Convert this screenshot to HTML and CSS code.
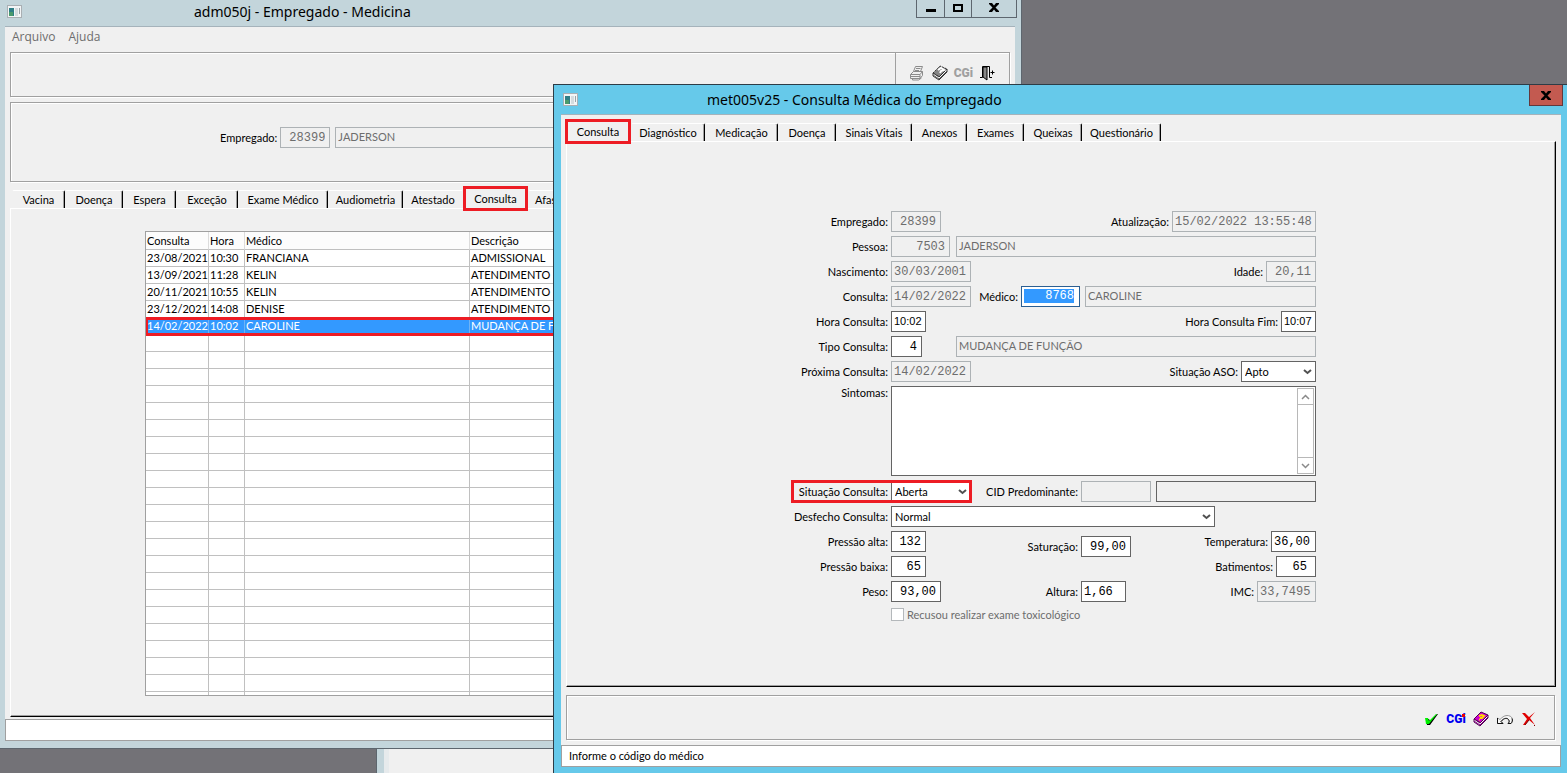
FILE: index.html
```html
<!DOCTYPE html>
<html lang="pt-BR">
<head>
<meta charset="utf-8">
<title>Consulta Médica do Empregado</title>
<link rel="stylesheet" href="styles.css">
</head>
<body>
<main class="desktop">
  <div class="window window-under"><div class="under-body"></div></div>

  <section class="window window-main">
    <header class="titlebar">
      <svg class="app-icon" width="15" height="13" viewBox="0 0 15 13" shape-rendering="crispEdges"><rect width="15" height="13" fill="#a9afb3"/><rect x="1" y="1" width="13" height="11" fill="#f3f5f6"/><rect x="2" y="3" width="5" height="8" fill="#2f7f86"/><rect x="2" y="7" width="4" height="4" fill="#4a9a6c"/><rect x="8" y="3" width="3" height="8" fill="#d5dcdf"/><rect x="12" y="3" width="1" height="6" fill="#98a3a8"/></svg>
      <h1 class="title">adm050j - Empregado - Medicina</h1>
      <div class="controls">
        <button class="control" aria-label="Minimizar"><svg width="10" height="9" viewBox="0 0 10 9"><path d="M0 6h10v3H0z"/></svg></button>
        <button class="control" aria-label="Maximizar"><svg width="10" height="9" viewBox="0 0 10 9"><path d="M1 2h8v6H1z" fill="none" stroke="#000" stroke-width="2"/></svg></button>
        <button class="control control-wide" aria-label="Fechar"><svg width="10" height="9" viewBox="0 0 10 9"><path d="M0 0h3l2 2.500L7 0h3v1L6.500 4.500 10 8v1H7L5 6.500 3 9H0V8l3.500-3.500L0 1z"/></svg></button>
      </div>
    </header>
    <div class="client">
      <nav class="menubar"><button class="menu-item">Arquivo</button><button class="menu-item">Ajuda</button></nav>
      <div class="etched toolbar-top">
        <div class="tool-group">
          <button class="tool" aria-label="Imprimir"><svg width="16" height="16" viewBox="0 0 16 16"><path d="M4.500 6.500l2-5h7l-2 5M7 3.500h4.500M6 5.500h4M1.500 9.500l3-3h9l-2.500 3zM1.500 9.500v4h9.500v-4M11 13.500l2.500-3v-4M2 11.500h9M3.500 13.500v1.500h6l3-2" fill="none" stroke="#8c8c8c"/></svg></button>
          <button class="tool" aria-label="Manual"><svg width="16" height="16" viewBox="0 0 16 16"><path d="M1 8l7-7 7 3-7 8z" fill="#858585" stroke="#333" stroke-dasharray="2 1"/><path d="M1 8v3l6 4 8-8V4l-8 8z" fill="#fff" stroke="#333"/><path d="M6 5l3-2 3 2-3 1-1 2" fill="none" stroke="#fff" stroke-width="2"/><path d="M1 10l6 4 8-8" fill="none" stroke="#555"/></svg></button>
          <button class="tool cgi cgi-off">CGi</button>
          <button class="tool" aria-label="Sair"><svg width="16" height="16" viewBox="0 0 16 16"><path d="M1 12.500h2.500V1.500h7v11H13" fill="none" stroke="#000"/><path d="M4 2h4v13l-4-3z" fill="#888" stroke="#000"/><path d="M15.500 7.500h-4M13.500 5.500v4" fill="none" stroke="#000"/></svg></button>
        </div>
      </div>
      <div class="etched employee">
        <label class="label" for="emp">Empregado:</label>
        <input class="field mono num off w50" id="emp" value="28399" readonly>
        <input class="field off fill" aria-label="Nome do empregado" value="JADERSON" readonly>
      </div>
      <div class="tabs tabs-main" role="tablist">
        <button class="tab" role="tab">Vacina</button><button class="tab" role="tab">Doença</button><button class="tab" role="tab">Espera</button><button class="tab" role="tab">Exceção</button><button class="tab" role="tab">Exame Médico</button><button class="tab" role="tab">Audiometria</button><button class="tab tab-last" role="tab">Atestado</button><button class="tab tab-active" role="tab" aria-selected="true">Consulta</button><button class="tab tab-next" role="tab">Afastamento</button>
      </div>
      <div class="panel panel-main">
        <div class="grid-box">
          <table class="grid">
            <colgroup><col class="c-date"><col class="c-hour"><col class="c-doctor"><col></colgroup>
            <thead><tr><th>Consulta</th><th>Hora</th><th>Médico</th><th>Descrição</th></tr></thead>
            <tbody>
              <tr><td>23/08/2021</td><td>10:30</td><td>FRANCIANA</td><td>ADMISSIONAL</td></tr>
              <tr><td>13/09/2021</td><td>11:28</td><td>KELIN</td><td>ATENDIMENTO</td></tr>
              <tr><td>20/11/2021</td><td>10:55</td><td>KELIN</td><td>ATENDIMENTO</td></tr>
              <tr><td>23/12/2021</td><td>14:08</td><td>DENISE</td><td>ATENDIMENTO</td></tr>
              <tr class="selected"><td>14/02/2022</td><td>10:02</td><td>CAROLINE</td><td>MUDANÇA DE FUNÇÃO</td></tr>
              <tr><td></td><td></td><td></td><td></td></tr><tr><td></td><td></td><td></td><td></td></tr><tr><td></td><td></td><td></td><td></td></tr>
              <tr><td></td><td></td><td></td><td></td></tr><tr><td></td><td></td><td></td><td></td></tr><tr><td></td><td></td><td></td><td></td></tr>
              <tr><td></td><td></td><td></td><td></td></tr><tr><td></td><td></td><td></td><td></td></tr><tr><td></td><td></td><td></td><td></td></tr>
              <tr><td></td><td></td><td></td><td></td></tr><tr><td></td><td></td><td></td><td></td></tr><tr><td></td><td></td><td></td><td></td></tr>
              <tr><td></td><td></td><td></td><td></td></tr><tr><td></td><td></td><td></td><td></td></tr><tr><td></td><td></td><td></td><td></td></tr>
              <tr><td></td><td></td><td></td><td></td></tr><tr><td></td><td></td><td></td><td></td></tr><tr><td></td><td></td><td></td><td></td></tr>
              <tr><td></td><td></td><td></td><td></td></tr><tr><td></td><td></td><td></td><td></td></tr><tr><td></td><td></td><td></td><td></td></tr>
              <tr><td></td><td></td><td></td><td></td></tr>
            </tbody>
          </table>
        </div>
      </div>
      <footer class="status"></footer>
    </div>
  </section>

  <section class="window window-dialog">
    <header class="titlebar">
      <svg class="app-icon" width="15" height="13" viewBox="0 0 15 13" shape-rendering="crispEdges"><rect width="15" height="13" fill="#a9afb3"/><rect x="1" y="1" width="13" height="11" fill="#f3f5f6"/><rect x="2" y="3" width="5" height="8" fill="#2f7f86"/><rect x="2" y="7" width="4" height="4" fill="#4a9a6c"/><rect x="8" y="3" width="3" height="8" fill="#d5dcdf"/><rect x="12" y="3" width="1" height="6" fill="#98a3a8"/></svg>
      <h2 class="title">met005v25 - Consulta Médica do Empregado</h2>
      <button class="close" aria-label="Fechar"><svg width="10" height="9" viewBox="0 0 10 9"><path d="M0 0h3l2 2.500L7 0h3v1L6.500 4.500 10 8v1H7L5 6.500 3 9H0V8l3.500-3.500L0 1z"/></svg></button>
    </header>
    <div class="client">
      <div class="tabs tabs-dialog" role="tablist">
        <button class="tab tab-active" role="tab" aria-selected="true">Consulta</button><button class="tab" role="tab">Diagnóstico</button><button class="tab" role="tab">Medicação</button><button class="tab" role="tab">Doença</button><button class="tab" role="tab">Sinais Vitais</button><button class="tab" role="tab">Anexos</button><button class="tab" role="tab">Exames</button><button class="tab" role="tab">Queixas</button><button class="tab" role="tab">Questionário</button>
      </div>
      <div class="panel panel-dialog">
        <form class="form">
          <div class="row">
            <label class="label lead" for="f1">Empregado:</label><input class="field mono num off w50" id="f1" value="28399" readonly>
            <label class="label push" for="f2">Atualização:</label><input class="field mono off w145" id="f2" value="15/02/2022 13:55:48" readonly>
          </div>
          <div class="row">
            <label class="label lead" for="f3">Pessoa:</label><span class="slot"><input class="field mono num off w60" id="f3" value="7503" readonly></span>
            <input class="field off fill" aria-label="Nome da pessoa" value="JADERSON" readonly>
          </div>
          <div class="row">
            <label class="label lead" for="f4">Nascimento:</label><input class="field mono off w80" id="f4" value="30/03/2001" readonly>
            <label class="label push" for="f5">Idade:</label><input class="field mono num off w50" id="f5" value="20,11" readonly>
          </div>
          <div class="row">
            <label class="label lead" for="f6">Consulta:</label><input class="field mono off w80" id="f6" value="14/02/2022" readonly>
            <label class="label doctor" for="f7">Médico:</label><input class="field mono num active w60" id="f7" value="8768">
            <input class="field off fill spaced" aria-label="Nome do médico" value="CAROLINE" readonly>
          </div>
          <div class="row">
            <label class="label lead" for="f8">Hora Consulta:</label><input class="field time w35" id="f8" value="10:02">
            <label class="label push" for="f9">Hora Consulta Fim:</label><input class="field time w35" id="f9" value="10:07">
          </div>
          <div class="row">
            <label class="label lead" for="f10">Tipo Consulta:</label><span class="slot"><input class="field mono num w30" id="f10" value="4"></span>
            <input class="field off fill" aria-label="Descrição do tipo" value="MUDANÇA DE FUNÇÃO" readonly>
          </div>
          <div class="row">
            <label class="label lead" for="f11">Próxima Consulta:</label><input class="field mono off w80" id="f11" value="14/02/2022" readonly>
            <label class="label push" for="f12">Situação ASO:</label><select class="field select w75" id="f12"><option>Apto</option></select>
          </div>
          <div class="row row-notes">
            <label class="label lead" for="f13">Sintomas:</label>
            <div class="notes"><textarea class="notes-text" id="f13"></textarea>
              <div class="scroll" aria-hidden="true">
                <span class="scroll-end"><svg width="9" height="6" viewBox="0 0 9 6"><path d="M1 5l3.500-3.500L8 5" fill="none" stroke="#8a8a8a" stroke-width="1.500"/></svg></span>
                <span class="scroll-end scroll-down"><svg width="9" height="6" viewBox="0 0 9 6"><path d="M1 1l3.500 3.500L8 1" fill="none" stroke="#8a8a8a" stroke-width="1.500"/></svg></span>
              </div>
            </div>
          </div>
          <div class="row">
            <div class="marked"><label class="label lead" for="f14">Situação Consulta:</label><select class="field select w80" id="f14"><option>Aberta</option></select></div>
            <label class="label middle" for="f15">CID Predominante:</label><input class="field off w70" id="f15" readonly>
            <input class="field grey fill spaced" aria-label="Descrição do CID" readonly>
          </div>
          <div class="row">
            <label class="label lead" for="f16">Desfecho Consulta:</label><select class="field select w325" id="f16"><option>Normal</option></select>
          </div>
          <div class="vitals">
            <div class="stack">
              <div class="row"><label class="label lead" for="f17">Pressão alta:</label><input class="field mono num w35" id="f17" value="132"></div>
              <div class="row"><label class="label lead" for="f18">Pressão baixa:</label><input class="field mono num w35" id="f18" value="65"></div>
              <div class="row"><label class="label lead" for="f19">Peso:</label><input class="field mono num w50" id="f19" value="93,00"></div>
            </div>
            <div class="stack stack-middle">
              <div class="row"><label class="label middle" for="f20">Saturação:</label><input class="field mono num w50" id="f20" value="99,00"></div>
              <div class="row"><label class="label middle" for="f21">Altura:</label><input class="field mono w45" id="f21" value="1,66"></div>
            </div>
            <div class="stack stack-right">
              <div class="row"><label class="label push" for="f22">Temperatura:</label><input class="field mono w45" id="f22" value="36,00"></div>
              <div class="row"><label class="label push" for="f23">Batimentos:</label><input class="field mono num beats w40" id="f23" value="65"></div>
              <div class="row"><label class="label push" for="f24">IMC:</label><input class="field mono off w60" id="f24" value="33,7495" readonly></div>
            </div>
          </div>
          <label class="check"><input class="check-box" type="checkbox" disabled>Recusou realizar exame toxicológico</label>
        </form>
      </div>
      <div class="etched toolbar-bottom">
        <button class="tool" aria-label="Confirmar"><svg width="16" height="16" viewBox="0 0 16 16"><path d="M3 8h3l1 2 7-7h1L7 14H4z" fill="#000"/><path d="M2 7h3l1 3 7-7h1L6 13H3z" fill="#00f000"/></svg></button>
        <button class="tool cgi cgi-on">CGi<span class="cgi-dot"></span></button>
        <button class="tool" aria-label="Ajuda"><svg width="16" height="16" viewBox="0 0 16 16"><path d="M1 8l7-7 7 3-7 8z" fill="#d000d0" stroke="#500050"/><path d="M1 8v3l6 4 8-8V4l-8 8z" fill="#fff" stroke="#500050"/><path d="M6 5l3-1 2 1-2 2H7M6 8.500h1" fill="none" stroke="#ffd800" stroke-width="2"/><path d="M1 10l6 4 8-8" fill="none" stroke="#800080"/></svg></button>
        <button class="tool" aria-label="Desfazer"><svg width="16" height="16" viewBox="0 0 16 16"><path d="M.5 7v5.500H6l-2-2c3-4 7-4 8-1 .5 1 0 2-1 3h3c3-4 1-8-4-8-3 0-5 2-7 4z" fill="#f8f8f8" stroke="#999"/><path d="M.5 7v5.500H6l-2-2c3-4 7-4 8-1 .5 1 0 2-1 3h3c1-1 2-3 1-5" fill="none" stroke="#111"/></svg></button>
        <button class="tool" aria-label="Cancelar"><svg width="16" height="16" viewBox="0 0 16 16"><path d="M1 2h3l4 4 6-5-5 6 5 7-6-5-4 5H2l4-6z" fill="#e00000"/><path d="M4 14l4-5M13 14l1 1" stroke="#700" fill="none"/></svg></button>
      </div>
      <footer class="status">Informe o código do médico</footer>
    </div>
  </section>
</main>
</body>
</html>
```
FILE: styles.css
```css
* { box-sizing: border-box; }

body {
  margin: 0;
  font: 11px/13px Lato, "Liberation Sans", sans-serif;
  color: #000;
}

button, input, select, textarea { font: inherit; color: inherit; border-radius: 0; margin: 0; }
button { border: 0; background: none; padding: 0; white-space: nowrap; }

.desktop {
  position: relative;
  height: 100vh;
  overflow: hidden;
  background: #737277;
}

/* windows */
.window { position: absolute; display: flex; flex-direction: column; }
.window-under {
  left: 376px; right: 0; top: 700px; bottom: 0;
  padding-left: 7px;
  background: #c3d5db;
  border-left: 1px solid #5d666e;
}
.under-body { flex: 1; background: #f0f0f0; border-left: 5px solid #e6eaec; }
.window-main {
  left: 0; top: 0; bottom: 24px; width: 1022px;
  padding: 0 6px 7px 5px;
  background: #c3d5db;
  border: solid #5d666e;
  border-width: 0 1px 1px 0;
}
.window-dialog {
  left: 553px; right: 0; top: 84px; bottom: 0;
  padding: 0 6px 6px 7px;
  background: #66c9ea;
  border: solid #2d3c46;
  border-width: 1px 0 0 1px;
}

.titlebar { display: flex; align-items: flex-start; }
.window-main .titlebar { height: 26px; padding-left: 2px; }
.window-dialog .titlebar { height: 29px; padding-left: 2px; }
.app-icon { margin-top: 5px; }
.window-dialog .app-icon { margin-top: 8px; }
.title { margin: 0; font: 14px/24px "Noto Sans", "Open Sans", sans-serif; }
.window-main .title { margin-left: 172px; }
.window-dialog .title { margin-left: 129px; line-height: 30px; }

.controls { display: flex; margin-left: auto; border: solid #5d666e; border-width: 0 1px 1px 1px; height: 18px; }
.control { width: 27px; display: flex; justify-content: center; align-items: center; padding-bottom: 3px; }
.control + .control { border-left: 1px solid #5d666e; }
.control-wide { width: 45px; }
.window-main .controls { margin-right: -2px; }
.close {
  width: 34px; height: 21px; margin-left: auto; margin-right: -2px;
  display: flex; align-items: center; justify-content: center;
  background: #c35a50; border: 1px solid #63383c; border-top: 0;
}

.client {
  flex: 1; min-height: 0;
  display: flex; flex-direction: column;
  background: #f0f0f0;
  border-top: 1px solid #a5b3bb;
}

.etched {
  border: 1px solid #a0a0a0;
  box-shadow: 1px 1px 0 #fff, inset 1px 1px 0 #fff;
}

.menubar { display: flex; align-items: flex-start; gap: 13px; padding: 1px 7px; height: 25px; font: 12px/18px "Open Sans", "Noto Sans", sans-serif; color: #6d6d6d; }

.toolbar-top { margin: 0 5px 5px 5px; height: 45px; display: flex; justify-content: flex-end; flex: none; }
.tool-group { width: 114px; border-left: 1px solid #a0a0a0; padding: 12px 14px 0 13px; display: flex; justify-content: space-between; align-items: flex-start; }
.tool { display: flex; height: 16px; align-items: center; }
.tool svg { display: block; }
.cgi { width: 18px; justify-content: center; font: 900 12px/16px Roboto, "Liberation Sans", sans-serif; position: relative; }
.cgi-off { color: #a0a0a0; }
.cgi-on { color: #0000f0; }
.cgi-dot { position: absolute; right: 0; top: 3px; width: 3px; height: 3px; background: #e00; }

.employee { margin: 0 5px 6px 5px; height: 80px; display: flex; align-items: center; padding: 0 0 10px 209px; flex: none; }
.employee .fill { margin-left: 5px; }

/* tabs */
.tabs { display: grid; flex: none; }
.tabs-main {
  grid-template-columns: 53px 58px 53px 62px 90px 75px 60px 65px 90px;
  padding: 1px 0 0 7px; height: 19px; margin-top: 1px;
}
.tabs-dialog {
  grid-template-columns: 66px 74px 73px 58px 76px 55px 57px 58px 79px;
  padding: 8px 0 0 4px; height: 26px;
}
.tab {
  height: 18px; text-align: center; line-height: 15px;
  border: solid; border-width: 1px 1px 0 1px;
  border-color: #fff #000 #fff #f0f0f0;
  box-shadow: inset -1px 0 0 #a0a0a0;
  border-radius: 2px 2px 0 0;
}
.tab-last { border-right-color: #f0f0f0; box-shadow: none; }
.tab-next { text-align: left; padding-left: 6px; }
.tab-active {
  position: relative; z-index: 1;
  height: 25px; margin-top: -4px;
  border: 3px solid #ed1c24; border-radius: 0; box-shadow: none;
  background: #f0f0f0;
}

.panel {
  flex: 1; min-height: 0;
  border: solid; border-width: 1px;
  border-color: #fff #000 #000 #fff;
  box-shadow: inset -1px -1px 0 #a0a0a0;
}
.panel-main { margin: 0 6px 2px 5px; padding: 22px 20px 20px 134px; }
.panel-dialog { margin: 0 5px 8px 5px; padding: 69px 10px 0 225px; }

/* appointments table */
.grid-box { height: 100%; overflow: hidden; border: 1px solid #a0a0a0; background: #fff; }
.grid { width: 100%; table-layout: fixed; border-collapse: separate; border-spacing: 0; }
.c-date { width: 63px; }
.c-hour { width: 36px; }
.c-doctor { width: 225px; }
.grid th, .grid td {
  height: 17px; padding: 0 0 0 1px;
  font-weight: normal; text-align: left; line-height: 16px; white-space: nowrap;
  border: solid #c0c0c0; border-width: 0 1px 1px 0;
}
.grid th { height: 18px; background: #fcfcfc; border-right-color: #dcdcdc; }
.grid .selected { background: #3399ff; color: #fff; outline: 3px solid #ed1c24; outline-offset: -2px; }
.grid .selected td { border-color: #6fb3f5; }

.status { flex: none; height: 22px; padding: 3px 7px; background: #fff; border: 1px solid #a0a0a0; }

/* form */
.form { width: 524px; display: flex; flex-direction: column; gap: 4px; }
.row { display: flex; align-items: center; height: 21px; flex: none; }
.label { padding-right: 3px; text-align: right; white-space: nowrap; }
.lead { flex: none; width: 99px; }
.push { margin-left: auto; }
.doctor { width: 50px; }
.middle { width: 110px; flex: none; }
.slot { width: 65px; flex: none; display: flex; }
.spaced { margin-left: 5px; }

.field {
  height: 21px; padding: 0 2px; min-width: 0; flex: none;
  border: 1px solid #646464; background: #fff; outline: 0;
}
.field.fill { flex: 1; padding-bottom: 2px; }
.mono { font: 12px/15px "Liberation Mono", monospace; padding-top: 1px; }
.num { text-align: right; padding-right: 4px; }
.off { border-color: #adb2b5; background: #f0f0f0; color: #6d6d6d; }
.grey { background: #f0f0f0; }
.time { font: 11px/15px "Liberation Sans", sans-serif; padding-bottom: 2px; }
.beats { padding-right: 8px; }
.active {
  padding: 2px 5px 3px 2px;
  border-color: #2b5f93; color: #fff;
  background: linear-gradient(#3399ff, #3399ff) content-box, #fff;
}
.select {
  appearance: none; padding-left: 3px;
  background: #fff url("data:image/svg+xml,%3Csvg xmlns='http://www.w3.org/2000/svg' width='9' height='7'%3E%3Cpath d='M1 2l3.500 3L8 2' fill='none' stroke='%23505050' stroke-width='2'/%3E%3C/svg%3E") no-repeat right 3px center;
}
.w30 { width: 31px; }
.w35 { width: 35px; }
.w40 { width: 40px; }
.w45 { width: 45px; }
.w50 { width: 50px; }
.w60 { width: 59px; }
.w70 { width: 70px; }
.w75 { width: 75px; }
.w80 { width: 80px; }
.w145 { width: 144px; }
.w325 { width: 324px; }

.row-notes { height: 90px; align-items: flex-start; margin-bottom: 1px; }
.notes { flex: 1; height: 90px; display: flex; border: 1px solid #646464; background: #fff; padding: 1px; }
.notes-text { flex: 1; border: 0; resize: none; outline: 0; background: none; }
.scroll { width: 17px; border: 1px solid #b8b8b8; display: flex; flex-direction: column; justify-content: space-between; }
.scroll-end { height: 16px; display: flex; align-items: center; justify-content: center; border-bottom: 1px solid #b8b8b8; }
.scroll-down { border-bottom: 0; border-top: 1px solid #b8b8b8; }

.marked { display: flex; align-items: center; flex: none; outline: 3px solid #ed1c24; outline-offset: -2px; }

.vitals { display: flex; }
.stack { display: flex; flex-direction: column; gap: 4px; }
.stack-middle { width: 160px; padding-top: 5px; gap: 24px; margin-left: 30px; }
.stack-right { flex: 1; }

.check { display: flex; align-items: center; gap: 3px; margin-left: 99px; margin-top: 2px; color: #6d6d6d; }
.check-box { appearance: none; width: 13px; height: 13px; border: 1px solid #b4b8bb; background: #fff; }

.toolbar-bottom {
  flex: none; height: 45px; margin: 0 6px 5px 5px; padding: 15px 17px 0 0;
  display: flex; justify-content: flex-end; gap: 8px;
}
```
